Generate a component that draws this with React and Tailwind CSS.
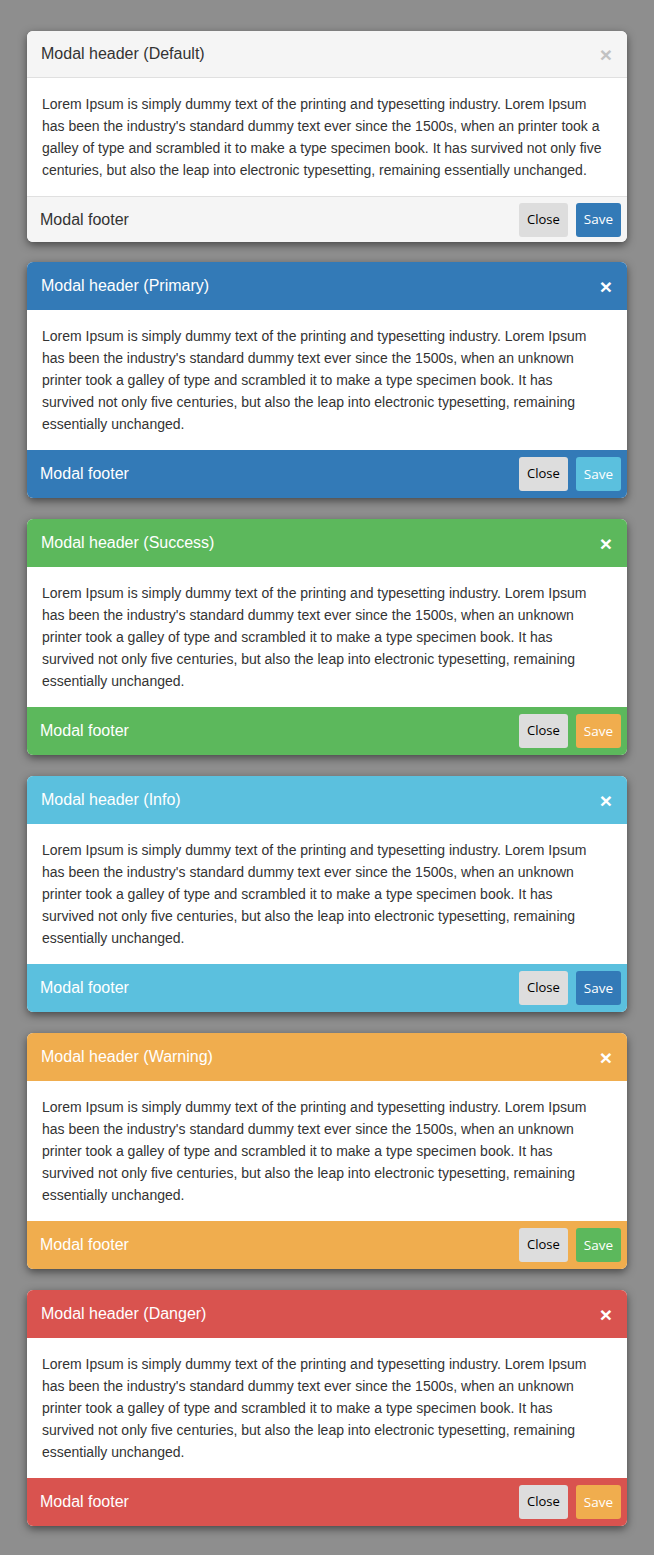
const SHORT =
  "Lorem Ipsum is simply dummy text of the printing and typesetting industry. Lorem Ipsum has been the industry's standard dummy text ever since the 1500s, when an printer took a galley of type and scrambled it to make a type specimen book. It has survived not only five centuries, but also the leap into electronic typesetting, remaining essentially unchanged.";
const LONG =
  "Lorem Ipsum is simply dummy text of the printing and typesetting industry. Lorem Ipsum has been the industry's standard dummy text ever since the 1500s, when an unknown printer took a galley of type and scrambled it to make a type specimen book. It has survived not only five centuries, but also the leap into electronic typesetting, remaining essentially unchanged.";

const variants = [
  {
    name: 'Default',
    bar: 'bg-[#f5f5f5] text-[#333]',
    header: 'h-[47px] border-b border-[#e0e0e0]',
    footer: 'h-[46px] border-t border-[#e0e0e0]',
    x: 'text-[#c2c2c2]',
    save: 'bg-[#337ab7]',
    text: SHORT,
    wrap: '-mb-px',
  },
  { name: 'Primary', bar: 'bg-[#337ab7] text-white', save: 'bg-[#5bc0de]' },
  { name: 'Success', bar: 'bg-[#5cb85c] text-white', save: 'bg-[#f0ad4e]' },
  { name: 'Info', bar: 'bg-[#5bc0de] text-white', save: 'bg-[#337ab7]' },
  { name: 'Warning', bar: 'bg-[#f0ad4e] text-white', save: 'bg-[#5cb85c]' },
  { name: 'Danger', bar: 'bg-[#d9534f] text-white', save: 'bg-[#f0ad4e]' },
];

const Modal = ({ v }) => (
  <div className={`w-[600px] overflow-hidden rounded-[6px] bg-white shadow-[0_3px_9px_rgba(0,0,0,0.5)] ${v.wrap || ''}`}>
    <div className={`flex items-center justify-between pl-[14px] pr-[15px] ${v.bar} ${v.header || 'h-[48px]'}`}>
      <h4 className="text-[16px]">Modal header ({v.name})</h4>
      <span className={`text-[21px] leading-none font-bold ${v.x || 'text-white'}`}>×</span>
    </div>
    <div className="pt-[15px] pb-[15px] pl-[15px] pr-[23px] text-[14px] leading-[22px] text-[#333]">
      <p>{v.text || LONG}</p>
    </div>
    <div className={`flex items-center justify-between pl-[13px] pr-[6px] ${v.bar} ${v.footer || 'h-[48px]'}`}>
      <span className="text-[16px]">Modal footer</span>
      <div className="flex gap-2 font-['Open_Sans',sans-serif] text-[13px]">
        <button className="h-[34px] rounded-[3px] bg-[#dddddd] px-2 text-black">Close</button>
        <button className={`h-[34px] rounded-[3px] px-2 text-[13.5px] text-white ${v.save}`}>Save</button>
      </div>
    </div>
  </div>
);

export default function App() {
  return (
    <div className="flex min-h-[1555px] flex-col items-center gap-[21px] bg-[#8e8e8e] pt-[31px] pb-[30px] font-['Liberation_Sans',Arial,sans-serif]">
      {variants.map((v) => (
        <Modal key={v.name} v={v} />
      ))}
    </div>
  );
}
